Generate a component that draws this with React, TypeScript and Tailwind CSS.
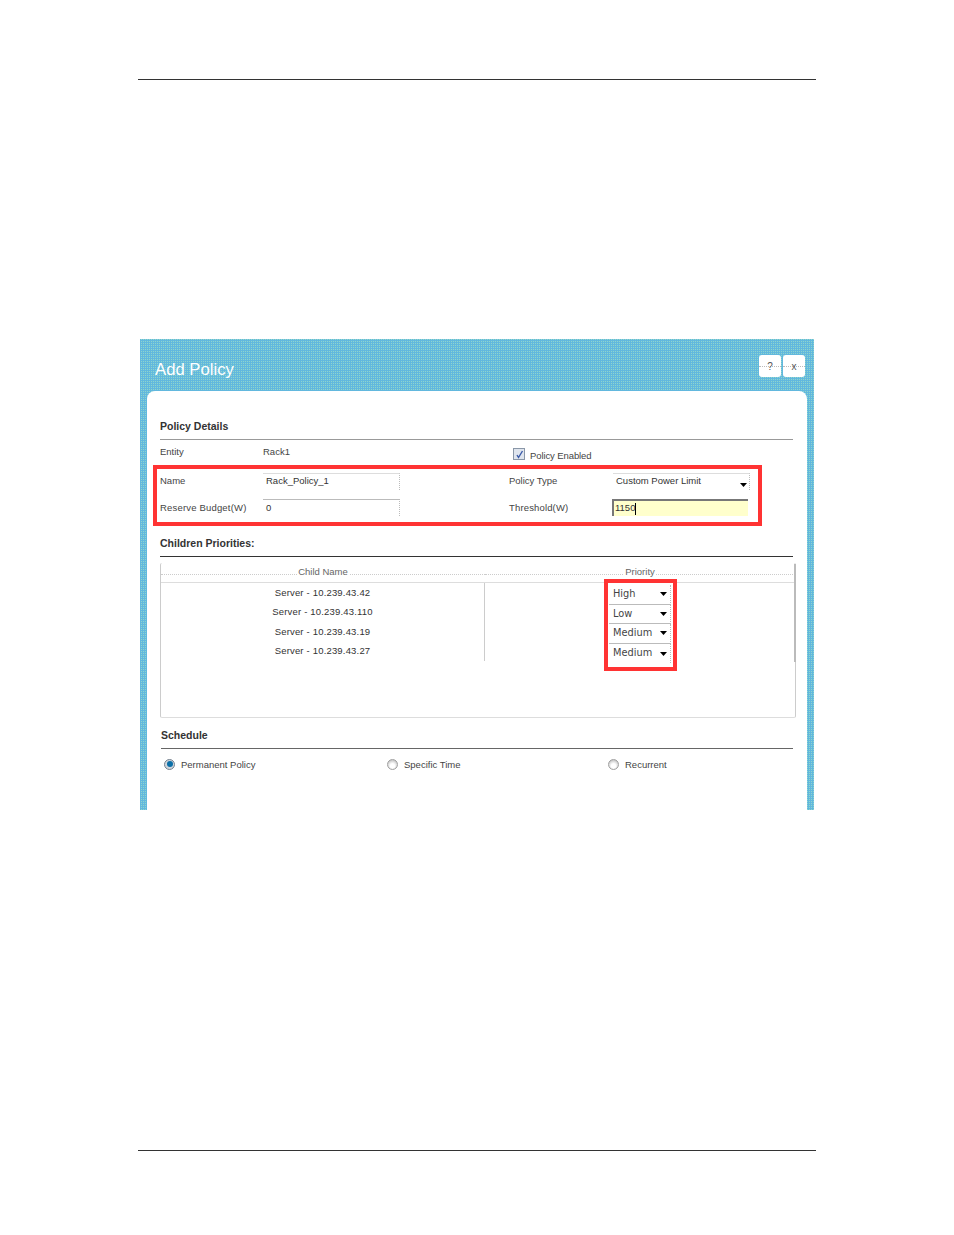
const sans = "font-['Liberation_Sans',Arial,sans-serif]";

const children = [
  { name: "Server - 10.239.43.42", priority: "High" },
  { name: "Server - 10.239.43.110", priority: "Low" },
  { name: "Server - 10.239.43.19", priority: "Medium" },
  { name: "Server - 10.239.43.27", priority: "Medium" },
];

function Caret({ className }: { className: string }) {
  return (
    <svg width="7" height="4" viewBox="0 0 7 4" className={className}>
      <path d="M0 0h7L3.5 4z" fill="#000" />
    </svg>
  );
}

function Radio({ checked }: { checked?: boolean }) {
  return (
    <span
      className={`mb-[2px] flex h-[11px] w-[11px] items-center justify-center rounded-full border ${
        checked
          ? "border-[#77828f] bg-[#cfd6dd]"
          : "border-[#a0a0a0] bg-[radial-gradient(circle_at_50%_65%,#ffffff_30%,#bdbdbd_85%)]"
      }`}
    >
      {checked && <span className="h-[6px] w-[6px] rounded-full bg-[#0b6fa8]" />}
    </span>
  );
}

function HeadingRule({ title, line }: { title: string; line: string }) {
  return (
    <div className={`border-b ${line} pb-[6px]`}>
      <h2 className="text-[10.5px] leading-[14px] font-bold text-[#333]">{title}</h2>
    </div>
  );
}

function IconButton({ label }: { label: string }) {
  return (
    <button className="relative flex h-[22px] w-[22px] items-center justify-center rounded-[3px] bg-white text-[10px] text-[#555]">
      <span className="absolute top-[11px] right-0 left-0 border-t border-dotted border-[#bbb]" />
      <span className="relative">{label}</span>
    </button>
  );
}

export default function App() {
  return (
    <div className={`h-[1235px] w-[954px] bg-white px-[138px] pt-[79px] ${sans}`}>
      <div className="flex h-[1072px] w-[678px] flex-col border-y border-[#333]">
        <div className="mx-[2px] mt-[259px] h-[471px] w-[674px] overflow-hidden bg-[conic-gradient(#8fd6cc_25%,#62b8de_0)] bg-[length:2px_2px] px-[7px]">
          <div className="flex h-[52px] items-center justify-between pr-[2px] pl-[8px]">
            <h1 className="pt-[9px] text-[16.7px] leading-[24px] text-white">Add Policy</h1>
            <div className="flex gap-[2px] pt-[2px]">
              <IconButton label="?" />
              <IconButton label="x" />
            </div>
          </div>

          <div className="h-[419px] rounded-t-[8px] bg-white pt-[28px] pr-[14px] pl-[13px] text-[9.5px] text-[#444]">
            <HeadingRule title="Policy Details" line="border-[#999]" />

            <div className="relative">
              <div className="grid h-[26px] grid-cols-[103px_250px_auto] items-center">
                <span className="mb-[2px]">Entity</span>
                <span className="mb-[2px]">Rack1</span>
                <label className="flex items-center gap-[5px] pt-[6px]">
                  <span className="mb-[4px] flex h-[12px] w-[12px] items-center justify-center border border-[#8a97a8] bg-[#dfe5ee]">
                    <svg width="9" height="9" viewBox="0 0 9 9" fill="none">
                      <path d="M2 5l1.5 2.5L7.5 1" stroke="#3a5aa8" strokeWidth="1.4" />
                    </svg>
                  </span>
                  <span className="tracking-[-0.1px]">Policy Enabled</span>
                </label>
              </div>

              <div className="grid h-[27px] grid-cols-[103px_137px_109px_104px_auto] items-center pt-[4px]">
                <span>Name</span>
                <div className="flex h-[17px] items-center border-t border-r border-t-[#ddd] border-r-[#bbb] [border-right-style:dotted] pb-[2px] pl-[3px] text-[#333]">
                  Rack_Policy_1
                </div>
                <span />
                <span>Policy Type</span>
                <div className="flex h-[17px] w-[137px] items-center justify-between border-t border-r border-t-[#ddd] border-r-[#bbb] [border-right-style:dotted] pr-[2px] pl-[3px] text-[#333]">
                  <span className="mb-[2px]">Custom Power Limit</span>
                  <Caret className="mt-[5px]" />
                </div>
              </div>

              <div className="grid h-[27px] grid-cols-[103px_137px_109px_103px_auto] items-center pt-[2px]">
                <span className="pt-[2px] tracking-[0.18px]">Reserve Budget(W)</span>
                <div className="flex h-[17px] items-center border-t border-r border-t-[#bbb] border-r-[#bbb] [border-right-style:dotted] pl-[3px] text-[#333]">
                  0
                </div>
                <span />
                <span className="pt-[2px] tracking-[0.15px]">Threshold(W)</span>
                <div className="flex h-[17px] w-[136px] items-center border-t-2 border-l-2 border-t-[#777] border-l-[#777] bg-[#ffffcc] pl-[1px] text-[#333]">
                  1150
                  <span className="h-[12px] w-px bg-black" />
                </div>
              </div>

              <div className="absolute top-[25px] left-[-7px] h-[61px] w-[609px] border-4 border-[#ff3333]" />
            </div>

            <div className="mt-[16px]">
              <HeadingRule title="Children Priorities:" line="border-[#333]" />
            </div>

            <div className="relative mt-[6px] h-[155px] w-[636px] rounded-[2px] border-x border-b border-x-[#ccc] border-b-[#ddd]">
              <div className="grid h-[20px] grid-cols-[324px_1fr] border-b border-[#ddd] text-[#666]">
                <div className="relative flex items-start justify-center">
                  <div className="absolute top-[11px] right-0 left-0 border-t border-dotted border-[#ccc]" />
                  <span className="relative bg-white px-[1px] pt-[3px] leading-[12px]">Child Name</span>
                </div>
                <div className="relative flex items-start justify-center">
                  <div className="absolute top-[11px] right-0 left-0 border-t border-dotted border-[#ccc]" />
                  <span className="relative bg-white px-[1px] pt-[3px] leading-[12px]">Priority</span>
                </div>
              </div>

              <div className="grid grid-cols-[324px_1fr] grid-rows-[78.4px]">
                <div className="border-r border-[#ccc]">
                  {children.map((c) => (
                    <div key={c.name} className="flex h-[19.6px] items-center justify-center tracking-[0.18px] text-[#333]">
                      {c.name}
                    </div>
                  ))}
                </div>
                <div className="mt-[2px] flex flex-col items-center">
                  {children.map((c, i) => (
                    <div
                      key={i}
                      className="flex h-[19.6px] w-[62px] shrink-0 items-center justify-between border-r border-b border-r-[#bbb] border-b-[#bbb] [border-right-style:dotted] pr-[2px] pl-[4px] font-['DejaVu_Sans',sans-serif] text-[9.8px] text-[#444] last:border-b-0"
                    >
                      <span>{c.priority}</span>
                      <Caret className="mr-[1px]" />
                    </div>
                  ))}
                </div>
              </div>

              <div className="absolute top-[16px] left-[443px] h-[92px] w-[73px] border-4 border-[#ff3333]" />
              <div className="absolute top-[1px] right-[-1px] h-[98px] w-[2px] bg-[#bbb]" />
            </div>

            <div className="mt-[10px] ml-[1px]">
              <HeadingRule title="Schedule" line="border-[#666]" />
            </div>

            <div className="mt-[9px] grid grid-cols-[223px_221px_auto] pl-[4px]">
              <label className="flex items-center gap-[6px]">
                <Radio checked /> Permanent Policy
              </label>
              <label className="flex items-center gap-[6px]">
                <Radio /> Specific Time
              </label>
              <label className="flex items-center gap-[6px]">
                <Radio /> Recurrent
              </label>
            </div>
          </div>
        </div>
      </div>
    </div>
  );
}
